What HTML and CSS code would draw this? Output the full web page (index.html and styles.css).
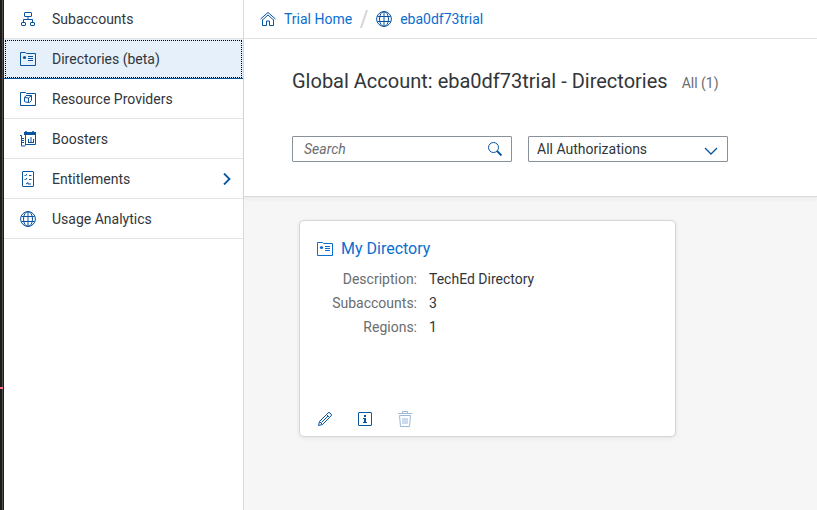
FILE: index.html
```html
<!DOCTYPE html>
<html lang="en">
<head>
<meta charset="utf-8">
<meta name="viewport" content="width=device-width, initial-scale=1">
<title>Directories</title>
<link rel="stylesheet" href="styles.css">
</head>
<body>
<svg class="symbols" aria-hidden="true">
  <symbol id="folder" viewBox="0 0 16 16">
    <path d="M.5 14.500V1.500H5.500L6.500 2.500H15.500V14.500Z" fill="none" stroke="currentColor" stroke-linejoin="round"/>
  </symbol>
  <symbol id="directory" viewBox="0 0 16 16">
    <use href="#folder"/>
    <circle cx="4.500" cy="6.500" r="1.600" fill="currentColor"/>
    <path d="M8 5.500h5M8 7.500h5M8 9.500h5" stroke="currentColor"/>
  </symbol>
  <symbol id="globe" viewBox="0 0 16 16">
    <g fill="none" stroke="currentColor"><circle cx="8" cy="8" r="7.400"/><ellipse cx="8" cy="8" rx="4.500" ry="7.400"/><path d="M8 .5v15M1.500 5.500h13M1.500 10.500h13"/></g>
  </symbol>
</svg>
<div class="window-edge"></div>
<nav class="side-nav" aria-label="Account">
  <a class="nav-item" href="#">
    <svg class="icon" viewBox="0 0 16 16" fill="none" stroke="currentColor"><rect x="4.500" y="1.500" width="7" height="4" rx=".5"/><path d="M8 5.500v3M3.500 11V8.500h9V11"/><rect x="1.500" y="11.500" width="4" height="3" rx=".5"/><rect x="10.500" y="11.500" width="4" height="3" rx=".5"/></svg>
    <span>Subaccounts</span>
  </a>
  <a class="nav-item selected" href="#" aria-current="page">
    <svg class="icon"><use href="#directory"/></svg>
    <span>Directories (beta)</span>
  </a>
  <a class="nav-item" href="#">
    <svg class="icon"><use href="#folder"/><path d="M4.500 6.500 6 4.500h5.500v5L9.500 11.500 5.500 11 4.500 10.500ZM4.500 6.500l4 .5v4.500M8.500 7l3-2.500" fill="none" stroke="currentColor"/></svg>
    <span>Resource Providers</span>
  </a>
  <a class="nav-item" href="#">
    <svg class="icon" viewBox="0 0 16 16" fill="none" stroke="currentColor"><path d="M4 2.500h12" stroke-width="3"/><path d="M6 0v4M13 0v4" stroke-width="1.500"/><path d="M5.500 3v11.500M5.500 13.500h10V3M8.500 11.500V8M11 11.500V6M13.500 11.500V8M8 11.500h6M0 4.500h1.500v10.500H5M2 7.500h2M2 9.500h2M2 11.500h2"/></svg>
    <span>Boosters</span>
  </a>
  <a class="nav-item" href="#">
    <svg class="icon" viewBox="0 0 16 16" fill="none" stroke="currentColor"><rect x="2.500" y=".5" width="11" height="15" rx=".5"/><path d="m4.500 4 1 1L7 3M4.500 8l1 1L7 7M9 4.500h2.500M9 8.500h2.500M6 13l2-1.500v1.500h3"/></svg>
    <span>Entitlements</span>
    <svg class="nav-arrow" viewBox="0 0 8 12" fill="none" stroke="currentColor" stroke-width="1.800"><path d="m1 .5 5.500 5.500L1 11.500"/></svg>
  </a>
  <a class="nav-item" href="#">
    <svg class="icon"><use href="#globe"/></svg>
    <span>Usage Analytics</span>
  </a>
</nav>
<main class="page">
  <nav class="breadcrumb" aria-label="Breadcrumb">
    <a href="#"><svg class="icon" viewBox="0 0 16 16" fill="none" stroke="currentColor"><path d="M.5 8 8 1.500 15.500 8M2.500 9 8 4l5.500 5" /><path d="M2.500 8.500v6h4V10h3v4.500h4v-6"/></svg>Trial Home</a>
    <svg class="separator" viewBox="0 0 8 20" aria-hidden="true"><path d="M7 1 1 19" stroke="currentColor" stroke-width="2"/></svg>
    <a href="#"><svg class="icon"><use href="#globe"/></svg>eba0df73trial</a>
  </nav>
  <header class="page-header">
    <div class="title-row">
      <h1>Global Account: eba0df73trial - Directories</h1>
      <span class="count">All (1)</span>
    </div>
    <form class="filters">
      <div class="field search">
        <input type="search" placeholder="Search" aria-label="Search">
        <button type="button" aria-label="Run search"><svg class="icon" viewBox="0 0 16 16" fill="none" stroke="currentColor"><circle cx="6.500" cy="6.500" r="5"/><path d="m10 10 4.500 4.500" stroke-width="1.800"/></svg></button>
      </div>
      <div class="field choice">
        <select aria-label="Authorizations"><option>All Authorizations</option></select>
        <svg class="choice-arrow" viewBox="0 0 14 8" fill="none" stroke="currentColor" stroke-width="1.300"><path d="m1 1 6 6 6-6"/></svg>
      </div>
    </form>
  </header>
  <section class="content">
    <article class="card">
      <h2><a href="#"><svg class="icon"><use href="#directory"/></svg>My Directory</a></h2>
      <dl>
        <dt>Description:</dt><dd>TechEd Directory</dd>
        <dt>Subaccounts:</dt><dd>3</dd>
        <dt>Regions:</dt><dd>1</dd>
      </dl>
      <div class="actions">
        <button type="button" aria-label="Edit"><svg class="icon" viewBox="0 0 16 16" fill="none" stroke="currentColor"><path d="m1.500 14.500 1-4L11 2q1-1 2 0l1 1q1 1 0 2L5.500 13.500ZM2.500 10.500l3 3M9.500 3.500l3 3M4.500 11.500 11 5"/></svg></button>
        <button type="button" aria-label="Information"><svg class="icon" viewBox="0 0 16 16"><rect x="1.500" y="1.500" width="13" height="13" rx=".5" fill="none" stroke="currentColor"/><path d="M7 4h2v2H7ZM6 7h3v4h1v1H6v-1h1V8H6Z" fill="currentColor"/></svg></button>
        <button type="button" aria-label="Delete" disabled><svg class="icon" viewBox="0 0 16 16" fill="none" stroke="currentColor"><path d="M1 2.500h14M5.500 2V.5h5V2M2.500 4.500h11l-1 11h-9ZM6 7v6M8 7v6M10 7v6"/></svg></button>
      </div>
    </article>
  </section>
</main>
</body>
</html>
```
FILE: styles.css
```css
* { box-sizing: border-box; }

body {
  display: flex;
  min-height: 100vh;
  margin: 0;
  color: #32363a;
  background: #fff;
  font: 14px/20px Roboto, "Liberation Sans", sans-serif;
}

a { color: #0a6ed1; text-decoration: none; }
button { padding: 0; border: 0; background: none; color: #0854a0; }
h1, h2, dl, dd { margin: 0; font-weight: 400; }

.symbols { position: absolute; width: 0; height: 0; }
.icon { display: block; flex: none; width: 16px; height: 16px; }

.window-edge {
  flex: none;
  width: 4px;
  border-right: 1px solid #1d1b19;
  background:
    linear-gradient(#fa6d85, #fa6d85) 0 387px / 3px 2px no-repeat,
    linear-gradient(90deg, #1d1b19 2px, #54504c 2px);
}

.side-nav { flex: none; width: 240px; border-right: 1px solid #d9d9d9; }
.nav-item {
  display: flex;
  align-items: center;
  gap: 16px;
  height: 40px;
  padding: 0 12px 0 16px;
  border-bottom: 1px solid #e4e4e4;
  color: #32363a;
}
.nav-item:first-child { height: 39px; }
.nav-item .icon, .nav-arrow { color: #0854a0; }
.nav-arrow { width: 8px; height: 12px; margin-left: auto; }
.nav-item.selected {
  border-bottom-color: #0854a0;
  background: #e5f0fa;
  outline: 1px dotted #000;
  outline-offset: -2px;
}

.page { display: flex; flex: 1; flex-direction: column; min-width: 0; background: #f6f6f6; }

.breadcrumb {
  display: flex;
  align-items: center;
  gap: 8px;
  height: 39px;
  padding: 0 16px;
  border-bottom: 1px solid #e4e4e4;
  background: #fff;
}
.breadcrumb a { display: flex; align-items: center; gap: 8px; }
.breadcrumb .icon { color: #0854a0; }
.separator { width: 8px; height: 20px; color: #d5d5d5; }

.page-header {
  padding: 27px 48px 34px;
  border-bottom: 1px solid #d9d9d9;
  background: #fff;
  box-shadow: 0 2px 4px #0000000d;
}
.title-row { display: flex; align-items: baseline; gap: 14px; margin-bottom: 40px; white-space: nowrap; }
h1 { font-size: 20px; line-height: 30px; }
.count { color: #6a6d70; }

.filters { display: flex; gap: 16px; }
.field { display: flex; height: 26px; border: 1px solid #89919a; border-radius: 1px; background: #fff; }
.search { width: 220px; align-items: center; padding-right: 8px; }
.search input {
  flex: 1;
  min-width: 0;
  padding: 0 11px;
  border: 0;
  background: none;
  font: inherit;
}
.search input::placeholder { color: #6a6d70; font-style: italic; }
.choice { position: relative; width: 200px; }
.choice select {
  width: 100%;
  padding: 0 32px 0 8px;
  border: 0;
  appearance: none;
  background: none;
  color: inherit;
  font: inherit;
}
.choice-arrow { position: absolute; top: 10px; right: 9px; width: 14px; height: 8px; color: #0854a0; pointer-events: none; }

.content { padding: 23px 48px 32px 55px; }
.card {
  display: flex;
  flex-direction: column;
  max-width: 377px;
  min-height: 217px;
  padding: 16px 17px 9px;
  border: 1px solid #d5d5d5;
  border-radius: 5px;
  background: #fff;
  box-shadow: 0 1px 4px #00000014;
}
h2 { font-size: 16px; line-height: 24px; }
h2 a { display: flex; align-items: center; gap: 8px; }
dl { display: grid; grid-template-columns: 100px 1fr; column-gap: 12px; margin-top: 6px; line-height: 24px; }
dt { color: #6a6d70; text-align: right; }
.actions { display: flex; gap: 24px; margin-top: auto; }
.actions button:disabled { opacity: .4; }
```
